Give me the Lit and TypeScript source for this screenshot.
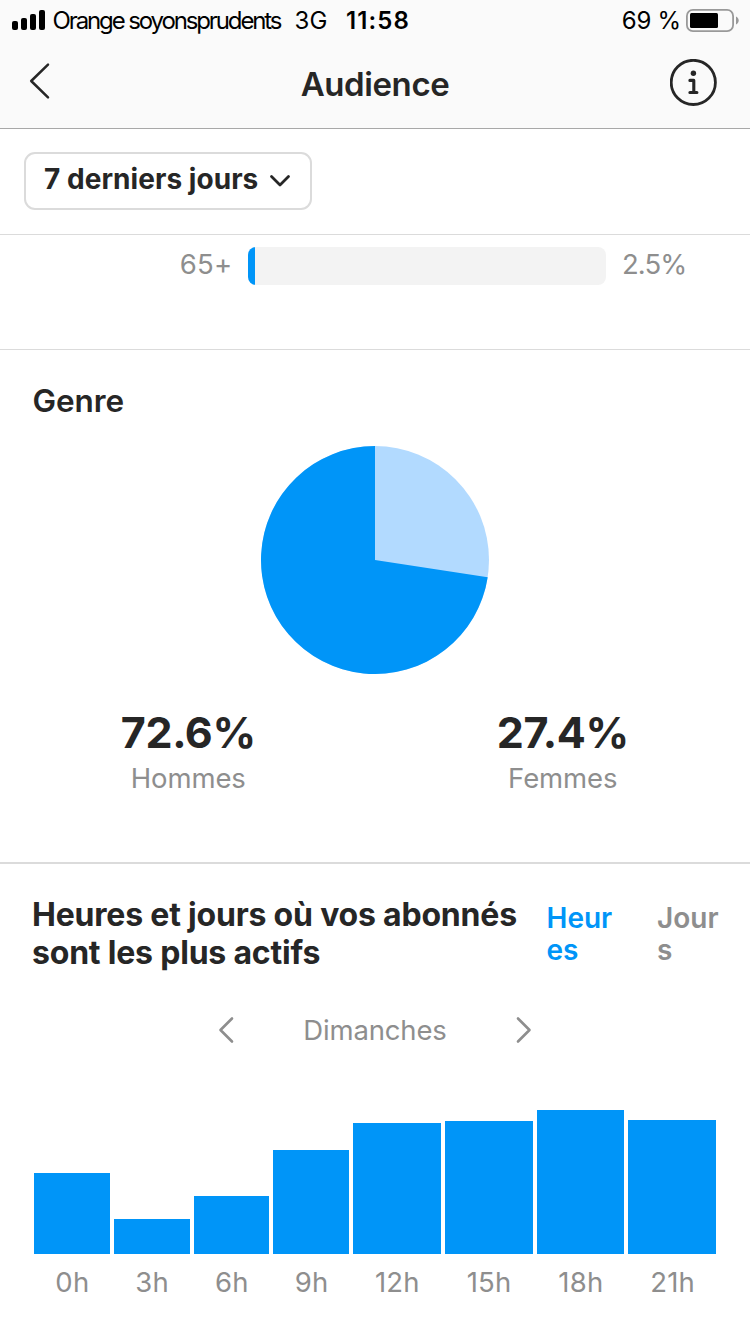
import { LitElement, html, css, svg } from "lit";
import { customElement, property, state } from "lit/decorators.js";
import { classMap } from "lit/directives/class-map.js";

@customElement("status-bar")
class StatusBar extends LitElement {
  static styles = css`
    :host {
      display: flex;
      align-items: center;
      height: 40px;
      padding: 0 11px 0 12px;
      font-size: 24px;
      line-height: 40px;
      color: #000;
      white-space: pre;
    }
    svg { display: block; flex: none; }
    span { padding-top: 2px; }
    .carrier { margin-left: 7.5px; width: 241px; letter-spacing: -2.12px; }
    .network { width: 51.5px; letter-spacing: 0.1px; margin-left: 1px; }
    .time { font-weight: 600; letter-spacing: 1.1px; }
    .level { margin-left: auto; margin-right: 5px; letter-spacing: -0.2px; }
  `;
  render() {
    return html`
      <svg width="33" height="40" viewBox="0 0 33 40">
        <rect x="0" y="21" width="6" height="9" rx="2" />
        <rect x="9" y="18" width="6" height="12" rx="2" />
        <rect x="18" y="14" width="6" height="16" rx="2" />
        <rect x="27" y="10" width="6" height="20" rx="2" />
      </svg>
      <span class="carrier">Orange soyonsprudents</span>
      <span class="network">3G</span>
      <span class="time">11:58</span>
      <span class="level">69 %</span>
      <svg width="53" height="40" viewBox="0 0 53 40">
        <rect x="0.9" y="9.9" width="46.2" height="21.2" rx="6" fill="none" stroke="#999" stroke-width="1.8" />
        <rect x="4" y="13" width="28" height="15" rx="1.5" />
        <path d="M50 16.5c3.6 1.5 3.6 6.5 0 8z" fill="#999" />
      </svg>
    `;
  }
}

@customElement("nav-header")
class NavHeader extends LitElement {
  @property() heading = "";
  static styles = css`
    :host {
      display: grid;
      grid-template-columns: 60px 1fr 60px;
      align-items: center;
      height: 88px;
      padding: 0 20px;
      border-bottom: 1px solid #a8a8a8;
    }
    h1 {
      margin: 0;
      text-align: center;
      font-size: 33px;
      line-height: 88px;
      font-weight: 600;
      letter-spacing: -0.4px;
    }
    svg { display: block; fill: none; stroke: #262626; }
    .info { justify-self: end; margin: 0 12px 3px 0; }
    .back { margin: 0 0 7px 8px; }
    .solid { fill: #262626; stroke: none; }
  `;
  render() {
    return html`
      <svg class="back" width="24" height="38" viewBox="0 0 24 38">
        <path d="M20 2.7 3.2 19 20 35.3" stroke-width="2.5" stroke-linecap="round" stroke-linejoin="round" />
      </svg>
      <h1>${this.heading}</h1>
      <svg class="info" width="48" height="48" viewBox="0.700 0.600 48 48">
        <circle cx="24" cy="24" r="22.1" stroke-width="2.8" />
        <circle class="solid" cx="24.1" cy="14.8" r="2.7" />
        <path d="M20.6 22h3.9v12.100M20.6 34.100h7" stroke-width="3.100" stroke-linecap="round" stroke-linejoin="round" />
      </svg>
    `;
  }
}

@customElement("age-row")
class AgeRow extends LitElement {
  @property() label = "";
  @property({ type: Number }) value = 0;
  static styles = css`
    :host {
      display: grid;
      grid-template-columns: 231px 358px 1fr;
      column-gap: 17px;
      align-items: center;
      height: 38px;
      font-size: 27.5px;
      line-height: 34px;
      color: #8e8e8e;
    }
    .label { text-align: right; letter-spacing: 0.3px; padding-bottom: 4px; margin-right: -1.5px; }
    .value { padding-bottom: 4px; letter-spacing: -0.9px; margin-left: -1px; }
    .track { height: 38px; border-radius: 8px; background: #f3f3f3; overflow: hidden; }
    .fill { height: 100%; background: #0095f8; }
  `;
  render() {
    return html`
      <span class="label">${this.label}</span>
      <div class="track"><div class="fill" style="width:${this.value * 0.78}%"></div></div>
      <span class="value">${this.value}%</span>
    `;
  }
}

@customElement("gender-split")
class GenderSplit extends LitElement {
  @property({ type: Number }) men = 0;
  @property({ type: Number }) women = 0;
  static styles = css`
    :host { display: block; }
    .pie { display: block; margin: 0 auto; }
    .figures { display: grid; grid-template-columns: 1fr 1fr; margin-top: 33px; padding-left: 1px; text-align: center; }
    .number {
      font-size: 43px;
      line-height: 50px;
      font-weight: 700;
      letter-spacing: -0.4px;
      color: #262626;
    }
    .name { font-size: 27.5px; line-height: 42px; letter-spacing: -0.1px; color: #8e8e8e; }
  `;
  render() {
    const angle = (this.women / 100) * 2 * Math.PI;
    const x = 114 + 114 * Math.sin(angle);
    const y = 114 - 114 * Math.cos(angle);
    return html`
      <svg class="pie" width="228" height="228" viewBox="0 0 228 228">
        <circle cx="114" cy="114" r="114" fill="#b2daff" />
        <path d="M114 114V0A114 114 0 1 0 ${x} ${y}z" fill="#0095f8" />
      </svg>
      <div class="figures">
        <div><div class="number">${this.men}%</div><div class="name">Hommes</div></div>
        <div><div class="number">${this.women}%</div><div class="name">Femmes</div></div>
      </div>
    `;
  }
}

@customElement("activity-chart")
class ActivityChart extends LitElement {
  private hours = [
    { label: "0h", height: 81 },
    { label: "3h", height: 35 },
    { label: "6h", height: 58 },
    { label: "9h", height: 104 },
    { label: "12h", height: 131 },
    { label: "15h", height: 133 },
    { label: "18h", height: 144 },
    { label: "21h", height: 134 },
  ];
  static styles = css`
    :host {
      display: grid;
      grid-template-columns: repeat(4, 75.75px) repeat(4, 87.75px);
      column-gap: 4px;
      align-items: end;
    }
    .bar { background: #0095f8; }
    .label {
      padding: 10px 0 0 1px;
      text-align: center;
      font-size: 27.5px;
      line-height: 36px;
      letter-spacing: 0.2px;
      color: #8e8e8e;
    }
  `;
  render() {
    return this.hours.map(
      (h) => html`
        <div>
          <div class="bar" style="height:${h.height}px"></div>
          <div class="label">${h.label}</div>
        </div>
      `,
    );
  }
}

@customElement("app-root")
class AppRoot extends LitElement {
  @state() private tab = "Heures";
  static styles = css`
    :host {
      display: block;
      height: 1334px;
      overflow: hidden;
      background: #fff;
      color: #262626;
      font-family: Inter, "Liberation Sans", sans-serif;
    }
    .top { background: #fafafa; }
    .filter {
      display: flex;
      align-items: flex-start;
      box-sizing: border-box;
      height: 106px;
      padding: 23px 24px 0;
      border-bottom: 1px solid #dbdbdb;
    }
    .select {
      display: flex;
      align-items: center;
      box-sizing: border-box;
      width: 288px;
      height: 58px;
      padding: 0 0 4px 18px;
      border: 2px solid #dbdbdb;
      border-radius: 11px;
      background: #fff;
      color: inherit;
      font: 700 28px/34px Inter, "Liberation Sans", sans-serif;
      letter-spacing: 0.05px;
    }
    .select svg { margin: 4px 0 0 10.5px; }
    .ages { height: 102px; padding-top: 12px; border-bottom: 1px solid #dbdbdb; }
    .gender { height: 481px; padding-top: 31px; border-bottom: 2px solid #dbdbdb; }
    h2 { margin: 0; font-size: 32px; line-height: 38px; font-weight: 700; letter-spacing: -0.2px; }
    .gender h2 {
      padding: 1px 0 0 32.5px;
      margin-bottom: 26px;
      font-size: 31.5px;
      font-weight: 600;
      letter-spacing: -0.1px;
    }
    .activity { padding: 32px 0 0 32px; }
    .title-row { display: flex; align-items: flex-start; }
    .title-row > * { flex: none; }
    .title-row h2 { width: 514.5px; }
    .tab {
      width: 66px;
      margin: 6px 44.5px 0 0;
      font-size: 28px;
      line-height: 32px;
      font-weight: 600;
      color: #8e8e8e;
      word-break: break-all;
    }
    .tab:last-child { margin-right: 0; width: 62px; }
    .selected { color: #0095f8; }
    .day {
      display: flex;
      align-items: center;
      justify-content: center;
      gap: 69px;
      height: 40px;
      margin: 38px 32px 0 0;
      font-size: 27.5px;
      letter-spacing: -0.15px;
      color: #8e8e8e;
    }
    .chart { display: flex; align-items: flex-end; height: 250px; padding-left: 2px; }
    svg { display: block; flex: none; }
  `;
  private chevron(points: string) {
    return html`<svg width="16" height="28" viewBox="0 0 16 28">
      ${svg`<polyline points=${points} fill="none" stroke="#8e8e8e" stroke-width="2.6" stroke-linecap="round" stroke-linejoin="round" />`}
    </svg>`;
  }
  render() {
    return html`
      <div class="top">
        <status-bar></status-bar>
        <nav-header heading="Audience"></nav-header>
      </div>
      <div class="filter">
        <button class="select">
          7 derniers jours
          <svg width="22" height="14" viewBox="0 0 22 14">
            <path d="M2.5 2.5 11 11l8.500-8.500" fill="none" stroke="#262626" stroke-width="2.8" stroke-linecap="round" stroke-linejoin="round" />
          </svg>
        </button>
      </div>
      <section class="ages"><age-row label="65+" value="2.5"></age-row></section>
      <section class="gender">
        <h2>Genre</h2>
        <gender-split men="72.6" women="27.4"></gender-split>
      </section>
      <section class="activity">
        <div class="title-row">
          <h2>Heures et jours où vos abonnés sont les plus actifs</h2>
          ${["Heures", "Jours"].map(
            (name) => html`<div class=${classMap({ tab: true, selected: name === this.tab })} @click=${() => (this.tab = name)}>${name}</div>`,
          )}
        </div>
        <div class="day">
          ${this.chevron("14,2.500 2.500,14 14,25.500")}
          <span>Dimanches</span>
          ${this.chevron("2,2.500 13.500,14 2,25.500")}
        </div>
        <div class="chart"><activity-chart></activity-chart></div>
      </section>
    `;
  }
}
